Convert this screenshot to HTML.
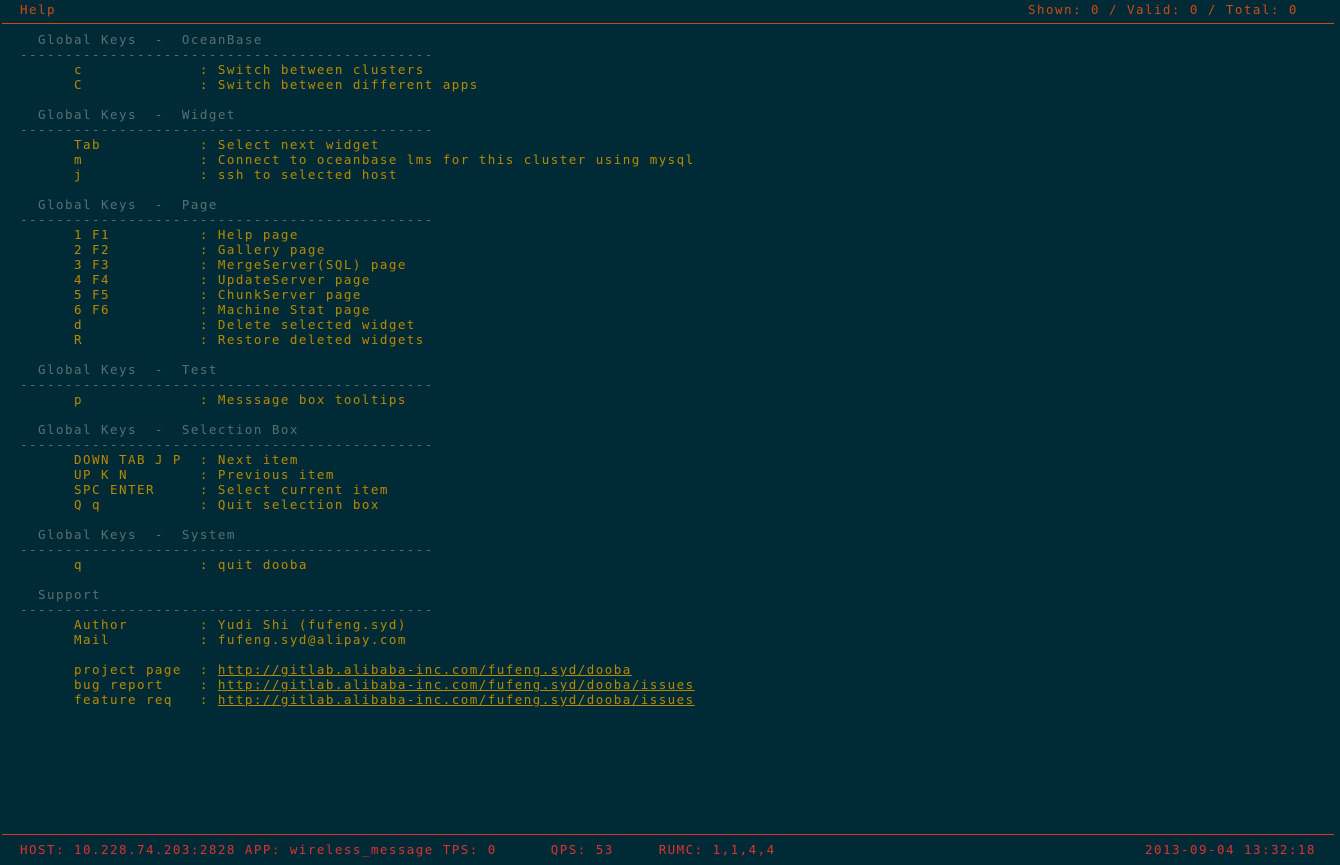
<!DOCTYPE html>
<html><head><meta charset="utf-8"><style>
html,body{margin:0;padding:0;background:#002b36;width:1340px;height:865px;overflow:hidden}
.t{position:absolute;margin:0;font-family:"DejaVu Sans Mono","Liberation Mono",monospace;font-size:12.5px;letter-spacing:1.47px;line-height:15px;white-space:pre}
.y{color:#b58900}.g{color:#586e75}.o{color:#cb4b16}.r{color:#dc322f}
a{color:#b58900;text-decoration:underline}
.hl{position:absolute;left:2px;width:1332px;height:1px}
</style></head><body>
<div class="t o" style="left:20px;top:2px">Help</div>
<div class="t o" style="left:1028px;top:2px">Shown: 0 / Valid: 0 / Total: 0</div>
<div class="hl" style="top:23px;background:#cb4b16"></div>
<pre class="t y" style="left:20px;top:32px"><span class="g">  Global Keys  -  OceanBase
----------------------------------------------</span>
      c             : Switch between clusters
      C             : Switch between different apps

<span class="g">  Global Keys  -  Widget
----------------------------------------------</span>
      Tab           : Select next widget
      m             : Connect to oceanbase lms for this cluster using mysql
      j             : ssh to selected host

<span class="g">  Global Keys  -  Page
----------------------------------------------</span>
      1 F1          : Help page
      2 F2          : Gallery page
      3 F3          : MergeServer(SQL) page
      4 F4          : UpdateServer page
      5 F5          : ChunkServer page
      6 F6          : Machine Stat page
      d             : Delete selected widget
      R             : Restore deleted widgets

<span class="g">  Global Keys  -  Test
----------------------------------------------</span>
      p             : Messsage box tooltips

<span class="g">  Global Keys  -  Selection Box
----------------------------------------------</span>
      DOWN TAB J P  : Next item
      UP K N        : Previous item
      SPC ENTER     : Select current item
      Q q           : Quit selection box

<span class="g">  Global Keys  -  System
----------------------------------------------</span>
      q             : quit dooba

<span class="g">  Support
----------------------------------------------</span>
      Author        : Yudi Shi (fufeng.syd)
      Mail          : fufeng.syd@alipay.com

      project page  : <a>http://gitlab.alibaba-inc.com/fufeng.syd/dooba</a>
      bug report    : <a>http://gitlab.alibaba-inc.com/fufeng.syd/dooba/issues</a>
      feature req   : <a>http://gitlab.alibaba-inc.com/fufeng.syd/dooba/issues</a></pre>
<div class="hl" style="top:834px;background:#dc322f"></div>
<div class="t r" style="left:20px;top:842px">HOST: 10.228.74.203:2828 APP: wireless_message TPS: 0      QPS: 53     RUMC: 1,1,4,4</div>
<div class="t r" style="left:1145px;top:842px">2013-09-04 13:32:18</div>
</body></html>
